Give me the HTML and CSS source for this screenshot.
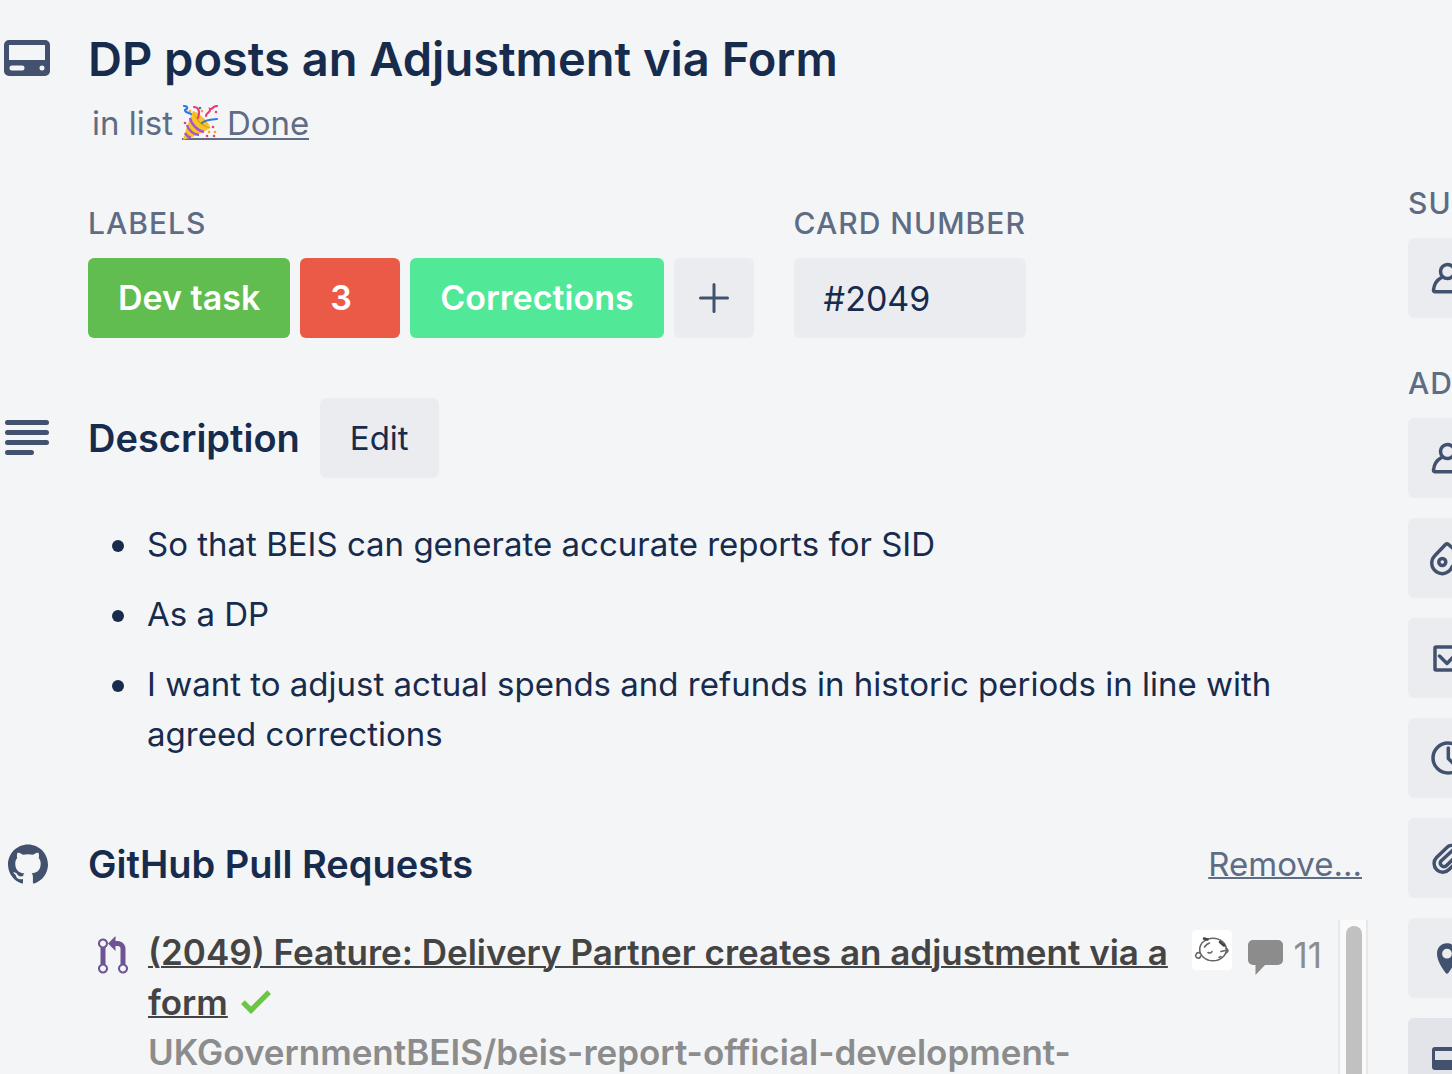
FILE: index.html
```html
<!DOCTYPE html>
<html lang="en">
<head>
<meta charset="utf-8">
<meta name="viewport" content="width=device-width, initial-scale=1">
<title>DP posts an Adjustment via Form</title>
<link rel="stylesheet" href="styles.css">
</head>
<body>
<div class="card">
  <main class="main">
    <header class="row header">
      <svg class="icon" width="46" height="36" viewBox="0 0 46 36" aria-hidden="true"><path fill="currentColor" fill-rule="evenodd" d="M5 0h36a5 5 0 0 1 5 5v26a5 5 0 0 1-5 5H5a5 5 0 0 1-5-5V5a5 5 0 0 1 5-5zm0 5v15h36V5zm3 20.500a2.500 2.500 0 0 0 0 5h10a2.500 2.500 0 0 0 0-5zm30 0a2.500 2.500 0 1 0 0 5 2.500 2.500 0 0 0 0-5z"/></svg>
      <div>
        <h1 class="title">DP posts an Adjustment via Form</h1>
        <p class="list">in list
          <a class="list-link" href="#done"><svg class="party" width="36" height="36" viewBox="0 0 36 36" role="img" aria-label="Party popper">
            <path fill="#f7c325" d="M11 6C18 8 26 16 28.500 23 20 28 9 33 1 35 2 30 7 15 11 6z"/>
            <path fill="#d99a12" d="M11 6c2 7 9 14 17.500 17-7 0-16-8-17.500-17z"/>
            <path fill="none" stroke="#a354d6" stroke-width="2.400" d="M8 13c1 6 8 13 14 14M5 20c1 5 7 10 12 10M3 28c1 2 3 4 6 5"/>
            <path fill="none" stroke="#2e7be0" stroke-width="2.200" stroke-linecap="round" d="M2 1c4 0 4 3 1 4 0 3 3 2 6 4M20 18c5-4 8-3 15-4"/>
            <path fill="none" stroke="#ee3c70" stroke-width="2.200" stroke-linecap="round" d="M12 2c5 0 6 5 4 11M24 11c0-4 5-3 4-7 3 1 2-3 7-3"/>
            <g fill="#ee3c70"><circle cx="3" cy="18" r="1.300"/><circle cx="31" cy="22" r="1.300"/><circle cx="25" cy="31" r="1.300"/><circle cx="32" cy="31" r="1.300"/><circle cx="34" cy="7" r="1.300"/></g>
            <g fill="#f5a623"><circle cx="8" cy="6" r="1.300"/><circle cx="20" cy="6" r="1.300"/><circle cx="33" cy="27" r="1.300"/><circle cx="27" cy="27" r="1.300"/></g>
            <circle fill="#2e7be0" cx="18" cy="3" r="1.300"/>
          </svg>Done</a></p>
      </div>
    </header>

    <div class="details">
      <section>
        <h2 class="caption">LABELS</h2>
        <div class="labels">
          <button class="label green">Dev task</button>
          <button class="label red">3</button>
          <button class="label mint">Corrections</button>
          <button class="add" aria-label="Add label"><svg width="30" height="30" viewBox="0 0 30 30" aria-hidden="true"><path d="M15 1.500v27M1.500 15h27" fill="none" stroke="currentColor" stroke-width="3" stroke-linecap="round"/></svg></button>
        </div>
      </section>
      <section>
        <h2 class="caption">CARD NUMBER</h2>
        <div class="number">#2049</div>
      </section>
    </div>

    <section class="row description">
      <svg class="icon" width="46" height="36" viewBox="0 0 46 36" aria-hidden="true"><path d="M3.500 2.500h39M3.500 12.500h39M3.500 22.500h39M3.500 32.500h24" fill="none" stroke="currentColor" stroke-width="5" stroke-linecap="round"/></svg>
      <div class="heading-line">
        <h2 class="heading">Description</h2>
        <button class="edit">Edit</button>
      </div>
    </section>
    <ul class="story">
      <li>So that BEIS can generate accurate reports for SID</li>
      <li>As a DP</li>
      <li>I want to adjust actual spends and refunds in historic periods in line with agreed corrections</li>
    </ul>

    <section class="row pulls">
      <svg class="icon github" width="40" height="40" viewBox="0 0 24 24" aria-hidden="true"><path fill="currentColor" d="M12 .297c-6.630 0-12 5.373-12 12 0 5.303 3.438 9.800 8.205 11.385.6.113.82-.258.82-.577 0-.285-.01-1.040-.015-2.040-3.338.724-4.042-1.610-4.042-1.610C4.422 18.070 3.633 17.700 3.633 17.700c-1.087-.744.084-.729.084-.729 1.205.084 1.838 1.236 1.838 1.236 1.070 1.835 2.809 1.305 3.495.998.108-.776.417-1.305.76-1.605-2.665-.3-5.466-1.332-5.466-5.930 0-1.310.465-2.380 1.235-3.220-.135-.303-.54-1.523.105-3.176 0 0 1.005-.322 3.300 1.230.96-.267 1.980-.399 3-.405 1.020.006 2.040.138 3 .405 2.280-1.552 3.285-1.230 3.285-1.230.645 1.653.24 2.873.12 3.176.765.84 1.230 1.910 1.230 3.220 0 4.610-2.805 5.625-5.475 5.920.42.36.81 1.096.81 2.220 0 1.606-.015 2.896-.015 3.286 0 .315.21.69.825.57C20.565 22.092 24 17.592 24 12.297c0-6.627-5.373-12-12-12"/></svg>
      <div class="heading-line spread">
        <h2 class="heading">GitHub Pull Requests</h2>
        <a class="remove" href="#remove">Remove...</a>
      </div>
    </section>
    <div class="pull-list">
      <article class="pull">
        <svg class="branch" width="30" height="40" viewBox="0 0 12 16" role="img" aria-label="Merged"><path fill="#6e5494" d="M11 11.280V5c-.03-.78-.34-1.470-.94-2.060C9.460 2.350 8.780 2.030 8 2H7V0L4 3l3 3V4h1c.27.02.48.11.69.31.21.2.3.42.31.69v6.280A1.993 1.993 0 0 0 10 15a1.993 1.993 0 0 0 1-3.720zm-1 2.920c-.66 0-1.200-.55-1.200-1.200 0-.65.55-1.200 1.200-1.200.65 0 1.200.55 1.200 1.200 0 .65-.55 1.200-1.200 1.200zM4 3c0-1.110-.89-2-2-2a1.993 1.993 0 0 0-1 3.720v6.560A1.993 1.993 0 0 0 2 15a1.993 1.993 0 0 0 1-3.720V4.720c.59-.34 1-.98 1-1.720zm-.8 10c0 .66-.55 1.200-1.200 1.200-.65 0-1.200-.55-1.200-1.200 0-.65.55-1.200 1.200-1.200.65 0 1.200.55 1.200 1.200zM2 4.200C1.340 4.200.8 3.650.8 3c0-.65.55-1.200 1.200-1.200.65 0 1.200.55 1.200 1.200 0 .65-.55 1.200-1.200 1.200z"/></svg>
        <div class="pull-text">
          <a class="pull-link" href="#pull">(2049) Feature: Delivery Partner creates an adjustment via a form</a>
          <svg class="tick" width="30" height="26" viewBox="0 3 12 10.400" role="img" aria-label="Checks passed"><path fill="#6cc644" d="M12 5l-8 8-4-4 1.500-1.500L4 10l6.500-6.500L12 5z"/></svg>
          <div class="repo">UKGovernmentBEIS/beis-report-official-development-</div>
        </div>
        <div class="meta">
          <svg class="avatar" width="40" height="40" viewBox="0 0 40 40" role="img" aria-label="Author">
            <g fill="none" stroke="#666" stroke-width="1.600" stroke-linecap="round"><ellipse cx="21" cy="19.500" rx="13.300" ry="11.300"/><path d="M8 23c-4-1.500-6 4-2.500 5 2 .5 3-.5 3-2M12.500 17q2-3 5-4M16 22.500q3 1.500 4-1M29 21.500l4-1M34 18q4 3 0 5M27 27.500l2-1"/><path stroke="#444" stroke-width="2.600" d="M12 8.500l3.500 1M28 12l4 3.500"/></g>
          </svg>
          <svg class="bubble" width="36" height="36" viewBox="0 0 36 36" role="img" aria-label="Comments"><path fill="#8c8c8c" d="M5 0h25a5 5 0 0 1 5 5v15a5 5 0 0 1-5 5H17L7.500 35V25H5a5 5 0 0 1-5-5V5a5 5 0 0 1 5-5z"/></svg>
          <span class="count">11</span>
        </div>
      </article>
      <div class="track"><div class="thumb"></div></div>
    </div>
  </main>

  <aside class="side">
    <section class="group">
      <h2 class="caption">SUGGESTED</h2>
      <button class="action" aria-label="Join"><svg class="line" viewBox="0 0 40 40"><circle cx="19.500" cy="13.500" r="7"/><path d="M13.500 19.500C9 22 6 27 5.500 32q0 1.700 1.700 1.700h24.600q1.700 0 1.700-1.700C33 27 30 22 25.500 19.500"/></svg></button>
    </section>
    <section class="group">
      <h2 class="caption">ADD TO CARD</h2>
      <button class="action" aria-label="Members"><svg class="line" viewBox="0 0 40 40"><circle cx="19.500" cy="13.500" r="7"/><path d="M13.500 19.500C9 22 6 27 5.500 32q0 1.700 1.700 1.700h24.600q1.700 0 1.700-1.700C33 27 30 22 25.500 19.500"/></svg></button>
      <button class="action" aria-label="Labels"><svg class="line" viewBox="0 0 40 40"><path d="M17 7L7 17.500A10.500 10.500 0 1 0 24 29L34 18 20.500 6.500Q18.500 5 17 7z"/><circle cx="14.300" cy="24" r="3.500"/></svg></button>
      <button class="action" aria-label="Checklist"><svg class="line" viewBox="0 0 40 40"><rect x="7" y="9" width="26" height="23" rx="1"/><path d="M11.500 18l7.500 7.500L31 13"/></svg></button>
      <button class="action" aria-label="Dates"><svg class="line" viewBox="0 0 40 40"><circle cx="20" cy="20" r="15"/><path d="M20.300 10v10.500l6 6"/></svg></button>
      <button class="action" aria-label="Attachment"><svg class="line" viewBox="0 0 40 40"><path d="M34 19L21 31.500A8.600 8.600 0 0 1 8.500 19.500L20 8.500a6.500 6.500 0 0 1 9 9L18 28a3.600 3.600 0 0 1-5-5L25 12"/></svg></button>
      <button class="action" aria-label="Location"><svg viewBox="0 0 40 40"><path fill="currentColor" fill-rule="evenodd" d="M19 5.300c6 0 10 4.500 10 10.400 0 7-5 14-8.500 19q-1.500 2-3 0C14 29.700 9 22.700 9 15.700 9 9.800 13 5.300 19 5.300zm0 5.500a4.900 4.900 0 1 0 0 9.800 4.900 4.900 0 0 0 0-9.800z"/></svg></button>
      <button class="action cover" aria-label="Cover"><svg viewBox="0 0 40 40"><path fill="currentColor" fill-rule="evenodd" d="M7 9h27a3 3 0 0 1 3 3v17a3 3 0 0 1-3 3H7a3 3 0 0 1-3-3V12a3 3 0 0 1 3-3zm0 4v9h27v-9z"/></svg></button>
    </section>
  </aside>
</div>
</body>
</html>
```
FILE: styles.css
```css
* { box-sizing: border-box; margin: 0; padding: 0; }

body {
  height: 100vh;
  overflow: hidden;
  background: #f4f5f7;
  color: #172b4d;
  font: 400 33px/50px Inter, "Liberation Sans", sans-serif;
}

button { font: inherit; color: inherit; border: 0; border-radius: 6px; height: 80px; }
svg { flex: none; }

.card { display: flex; gap: 40px; height: 100%; }
.main { flex: 1; min-width: 0; display: flex; flex-direction: column; }

.row { display: grid; grid-template-columns: 84px minmax(0, 1fr); padding-left: 4px; }
.icon { color: #42526e; }

.header { padding-top: 28px; }
.header .icon { margin-top: 12px; }
.title { font-size: 47px; font-weight: 600; line-height: 62px; }
.list { display: flex; align-items: baseline; gap: 9px; padding: 8px 4px 10px; color: #5e6c84; }
.list-link {
  display: inline-block;
  color: inherit;
  line-height: 30px;
  text-decoration: none;
  border-bottom: 2px solid;
}
.party { margin: -10px 9px -4px 0; vertical-align: middle; }

.details { display: flex; gap: 40px; padding: 40px 0 0 88px; }
.caption { color: #5e6c84; font-size: 30px; font-weight: 500; line-height: 50px; letter-spacing: 1px; }
.details .caption { margin-bottom: 10px; }
.labels { display: flex; gap: 10px; }
.label { min-width: 100px; padding: 0 30px; color: #fff; font-size: 34px; font-weight: 600; text-align: left; }
.green { background: #61bd4f; }
.red { background: #eb5a46; }
.mint { background: #51e898; }
.add { display: grid; place-items: center; width: 80px; background: #ebecf0; color: #42526e; }
.number { height: 80px; padding: 0 30px; border-radius: 6px; background: #ebecf0; font-size: 34px; line-height: 82px; }

.description { padding-top: 60px; align-items: center; }
.heading-line { display: flex; align-items: center; gap: 20px; }
.heading { font-size: 38px; font-weight: 600; }
.edit { padding: 0 30px; background: #ebecf0; }

.story { display: flex; flex-direction: column; gap: 20px; padding: 41px 60px 0 112px; list-style: none; }
.story li { display: grid; grid-template-columns: 35px minmax(0, 1fr); }
.story li::before { content: ""; width: 12px; height: 12px; margin-top: 21px; border-radius: 50%; background: currentColor; }

.pulls { padding-top: 80px; align-items: center; }
.github { margin-left: 4px; }
.spread { justify-content: space-between; padding-right: 6px; }
.remove { color: #5e6c84; text-decoration-thickness: 2px; }

.pull-list { display: flex; flex: 1; min-height: 0; margin-top: 31px; padding-left: 98px; overflow: hidden; }
.pull { display: flex; flex: 1; min-width: 0; padding: 7px 16px 0 0; font-size: 35px; }
.branch { margin: 9px 20px 0 0; }
.pull-text { flex: 1; min-width: 0; font-weight: 600; }
.pull-link { color: #444; text-decoration-thickness: 2px; }
.tick { margin-left: 4px; }
.repo { color: #8c8c8c; white-space: nowrap; }
.meta { display: flex; align-items: flex-start; padding-top: 3px; }
.avatar { border-radius: 4px; background: #fff; }
.bubble { margin: 10px 10px 0 16px; }
.count { color: #8c8c8c; }
.track { width: 30px; padding: 6px 6px 0; border: solid #e8e8e8; border-width: 0 2px; background: #fafafa; }
.thumb { width: 16px; height: 100%; border-radius: 8px 8px 0 0; background: #c1c1c1; }

/* The action column runs past the window edge and is clipped there. */
.side { flex: 0 0 44px; overflow: hidden; padding-top: 178px; }
.group { display: flex; flex-direction: column; gap: 20px; width: 420px; padding-bottom: 40px; }
.group .caption { margin-bottom: -10px; }
.action { display: flex; align-items: center; padding-left: 20px; background: #ebecf0; color: #42526e; }
.action svg { width: 40px; height: 40px; }
.cover { background: #e2e4ea; }
.line { fill: none; stroke: currentColor; stroke-width: 3.500; stroke-linecap: round; stroke-linejoin: round; }
```
